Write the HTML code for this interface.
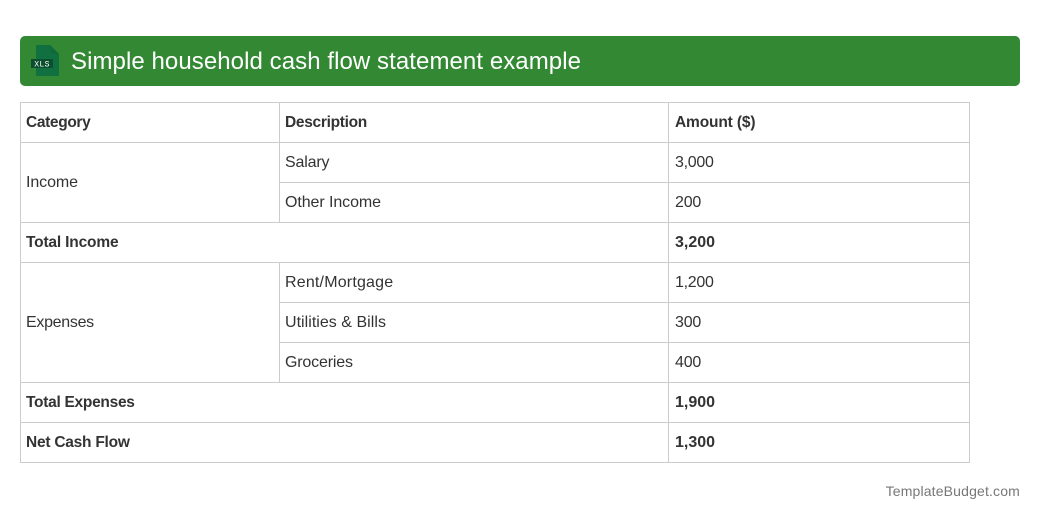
<!DOCTYPE html>
<html><head><meta charset="utf-8"><style>
html,body{margin:0;padding:0;background:#fff}
body{width:1040px;height:520px;position:relative;overflow:hidden;font-family:"Liberation Sans",sans-serif;color:#333}
.hd{position:absolute;left:20px;top:36px;width:1000px;height:50px;background:#338833;border-radius:5px}
.t{position:absolute;white-space:nowrap;font-size:16px;line-height:20px}
.b{font-weight:bold}
.h{font-size:15.5px}
.l{position:absolute;background:#ccc}
</style></head><body>
<div class="hd"></div>
<svg style="position:absolute;left:25px;top:40px" width="40" height="40" viewBox="0 0 40 40">
<path d="M11 6.500A1.500 1.500 0 0 1 12.500 5H25l9 9V34.500A1.500 1.500 0 0 1 32.500 36H12.500A1.500 1.500 0 0 1 11 34.500Z" fill="#107040"/>
<path d="M25 5l9 9H27a2 2 0 0 1-2-2Z" fill="#0f6a3c"/>
<rect x="6" y="19" width="22" height="9" fill="#0b4f2e"/>
<text x="17" y="26.500" font-family="Liberation Mono,monospace" font-size="8" fill="#fff" text-anchor="middle" letter-spacing=".4">XLS</text>
</svg>
<div class="t" style="left:71px;top:47px;font-size:24px;line-height:30px;color:#fff;letter-spacing:.07px">Simple household cash flow statement example</div>

<div class="l" style="left:20px;top:102px;width:950px;height:1px"></div>
<div class="l" style="left:20px;top:142px;width:950px;height:1px"></div>
<div class="l" style="left:279px;top:182px;width:691px;height:1px"></div>
<div class="l" style="left:20px;top:222px;width:950px;height:1px"></div>
<div class="l" style="left:20px;top:262px;width:950px;height:1px"></div>
<div class="l" style="left:279px;top:302px;width:691px;height:1px"></div>
<div class="l" style="left:279px;top:342px;width:691px;height:1px"></div>
<div class="l" style="left:20px;top:382px;width:950px;height:1px"></div>
<div class="l" style="left:20px;top:422px;width:950px;height:1px"></div>
<div class="l" style="left:20px;top:462px;width:950px;height:1px"></div>
<div class="l" style="left:20px;top:102px;width:1px;height:361px"></div>
<div class="l" style="left:969px;top:102px;width:1px;height:361px"></div>
<div class="l" style="left:668px;top:102px;width:1px;height:361px"></div>
<div class="l" style="left:279px;top:102px;width:1px;height:121px"></div>
<div class="l" style="left:279px;top:262px;width:1px;height:121px"></div>

<div class="t b h" style="left:26px;top:113px;letter-spacing:-.35px">Category</div>
<div class="t b h" style="left:285px;top:113px;letter-spacing:-.3px">Description</div>
<div class="t b h" style="left:675px;top:113px;letter-spacing:-.14px">Amount ($)</div>
<div class="t" style="left:26px;top:173px;letter-spacing:-.08px">Income</div>
<div class="t" style="left:285px;top:153px;letter-spacing:-.17px">Salary</div>
<div class="t" style="left:675px;top:153px;letter-spacing:-.3px">3,000</div>
<div class="t" style="left:285px;top:193px;letter-spacing:-.08px">Other Income</div>
<div class="t" style="left:675px;top:193px;letter-spacing:-.2px">200</div>
<div class="t b h" style="left:26px;top:233px;letter-spacing:-.17px">Total Income</div>
<div class="t b" style="left:675px;top:233px">3,200</div>
<div class="t" style="left:26px;top:313px;letter-spacing:-.3px">Expenses</div>
<div class="t" style="left:285px;top:273px;letter-spacing:.19px">Rent/Mortgage</div>
<div class="t" style="left:675px;top:273px;letter-spacing:-.3px">1,200</div>
<div class="t" style="left:285px;top:313px;letter-spacing:.03px">Utilities &amp; Bills</div>
<div class="t" style="left:675px;top:313px;letter-spacing:-.2px">300</div>
<div class="t" style="left:285px;top:353px;letter-spacing:-.17px">Groceries</div>
<div class="t" style="left:675px;top:353px;letter-spacing:-.2px">400</div>
<div class="t b h" style="left:26px;top:393px;letter-spacing:-.28px">Total Expenses</div>
<div class="t b" style="left:675px;top:393px">1,900</div>
<div class="t b h" style="left:26px;top:433px;letter-spacing:-.24px">Net Cash Flow</div>
<div class="t b" style="left:675px;top:433px">1,300</div>
<div class="t" style="right:20px;top:481px;font-size:14px;color:#777;letter-spacing:.16px">TemplateBudget.com</div>
</body></html>
